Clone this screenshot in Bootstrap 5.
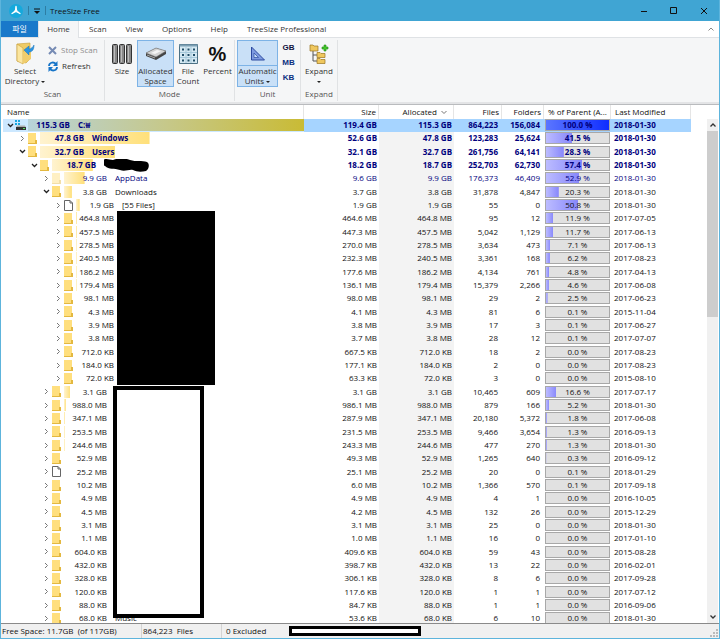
<!DOCTYPE html>
<html lang="ko">
<head>
<meta charset="utf-8">
<meta name="viewport" content="width=device-width, initial-scale=1">
<title>TreeSize Free</title>
<link href="https://cdn.jsdelivr.net/npm/bootstrap@5.3.0/dist/css/bootstrap.min.css" rel="stylesheet">
<style>
body{font:8px/12px "Open Sans","Noto Sans CJK KR",sans-serif;color:#111;background:#fff}
button{font:inherit;color:inherit;background:none;border:0;padding:0}
svg{display:block}
.app{height:100vh;border-left:1px solid #5db4dc;border-right:1px solid #5db4dc;border-bottom:1px solid #5db4dc}
.titlebar{height:21px;background:#40a5d3;padding-left:7px}
.titlebar .sep{width:1px;height:9px;background:#2d7da3}
.wbtn{width:30px;height:21px}
.tabs{height:17px;background:#fff;border-bottom:1px solid #dfe2e5}
.tabs a{color:#333;text-decoration:none;height:16px;line-height:15px}
.tabs .file{background:#1979ca;color:#fff;width:37px;text-align:center}
.tabs .home{background:#f5f6f7;border:1px solid #dfe2e5;border-width:0 1px;height:17px;width:41px;text-align:center}
.tabs .more{gap:19px;padding-left:10px}
.ribbon{background:#f5f6f7;height:64px;padding-top:2px;color:#333}
.grp{border-right:1px solid #e0e2e4;height:61px}
.grp .cap{color:#555;text-align:center;line-height:14px}
.tools{height:47px;padding:0 1px}
.tool{height:47px;line-height:10px;border:1px solid transparent;display:flex;flex-direction:column;align-items:center}
.tool .pic{height:25px;display:flex;align-items:center;justify-content:center;width:100%}
.tool.on{background:#c9e0f7;border-color:#7db3e6}
.tool.split .pic{border-bottom:1px solid #7db3e6}
.w-select{width:46px}.w-size{width:30px}.w-alloc{width:37px}.w-count{width:28px}.w-pct{width:31px}.w-auto2{width:41px}.w-exp{width:34px}
.side{width:55px}
.mode .tools,.unit .tools{padding-left:2px}
.pctsign{font:bold 20px/24px "Liberation Sans",sans-serif;color:#111}
.unitbtn{font:bold 8px/15px "Liberation Sans",sans-serif;color:#0a2f80;width:13px}
.unitbtn.first{color:#101040}
.stop{color:#8d8d8d!important}
.caret{display:inline-block;border:2px solid transparent;border-top-color:#222;border-bottom:0;vertical-align:middle}
.edge{height:3px;background:#e3e4e6;border-bottom:1px solid #b9bbbe}
.main{min-height:0;overflow:hidden;border-bottom:1px solid #8a8a8a;padding-left:2px}
.treebox{flex:1 1 0;min-width:0;overflow:hidden;position:relative}
.tree{width:100%;table-layout:fixed;border-collapse:separate;border-spacing:0;white-space:nowrap}
.tree th,.tree td{padding:0;overflow:hidden;vertical-align:middle}
.tree th{font-weight:400;height:14px;line-height:13px;border-right:1px solid #e5e5e5}
.tree th:last-child{border:0}
.tree tbody td{height:13px;line-height:12px}
.tree tbody tr:nth-child(3n) td{height:14px}
.c-size,.c-alloc{width:75px}.c-files{width:48px}.c-folders{width:42px}.c-pct{width:67px}.c-mod{width:80px}.c-end{width:16px}
.tree .num{text-align:right;padding-right:2px}
.tree .cnt{text-align:right;padding-right:4px}
.tree .day{padding-left:3px}
.tree td.alloc{background:#f3f3f3}
.hot{color:#00007d}
.tree .sel td{background:#a6d4ff}
.tree .sel td:first-child{background:#cce8ff}
.tree .sel td:last-child{background:#fff}
.node{height:13px}
.l0{padding-left:3px}.l1{padding-left:15px}.l2{padding-left:27px}.l3{padding-left:39px}.l4{padding-left:51px}
.twist{width:8px;height:12px;flex:none}
.kind{width:12px;flex:none;margin-right:2px}
.kind svg{margin-left:auto;margin-right:auto}
.lab{gap:8px;height:12px;background:linear-gradient(90deg,#fff3d0,#ffe07a) no-repeat left/0 100%}
.sel .lab{background-image:linear-gradient(90deg,#b8d3da,#c6c88a 50%,#c9bb35)}
.amt{width:44px;text-align:right;flex:none}
.l4 .amt{width:38px}
.l0 .amt{width:42px}
.l3 .amt{width:43px}
.meter{height:12px;margin:0 1px;border:1px solid #a8a8a8;line-height:10px;text-align:center;background:#e1e1e1 linear-gradient(90deg,#bcbcff,#8787fb) no-repeat left/0 100%}
.sel .meter{background-image:linear-gradient(90deg,#5b76ff,#0f2dff)}
.mask-a{position:absolute;left:114px;top:106px;width:98px;height:174px;background:#000}
.mask-b{position:absolute;left:110px;top:281px;width:91px;height:232px;background:#fff;border:4px solid #000}
.sbar{flex:none;width:11px;margin-right:1px;padding-top:14px}
.sbar .track{background:#f0f0f0}
.sbar button{height:12px}
.thumb{background:#cdcdcd;height:186px}
.status{height:14px;background:#f0f0f0;line-height:14px;white-space:pre}
.status .cell{border-right:1px solid #d4d4d4;padding:0 1px}
.s1{width:141px}.s2{width:80px}.s3{width:67px}
.mask-c{width:132px;height:10px;border:3px solid #000;background:#fff}
</style>
<script src="https://cdn.jsdelivr.net/npm/bootstrap@5.3.0/dist/js/bootstrap.bundle.min.js"></script>
</head>
<body>
<div class="app d-flex flex-column">
  <header class="titlebar d-flex align-items-center">
    <svg width="16" height="16" viewBox="0 0 16 16"><circle cx="8" cy="8" r="7" fill="#16a9dc"/><path d="M8 3.500V8M8 8l4 2.500M8 8l-4 2.500" stroke="#fff" stroke-width="1.400" stroke-linecap="round"/><path d="M8 3.200L9.700 8.500 8 9.500 6.300 8.500zM3.800 11L6.500 7.500 8.500 8.500zM12.200 11L9.500 7.500 7.500 8.500z" fill="#fff"/></svg>
    <span class="sep ms-1"></span>
    <button class="mx-1" aria-label="Customize toolbar"><svg width="8" height="8" viewBox="0 0 8 8"><path d="M1 2h6" stroke="#111"/><path d="M1 4h6L4 7z" fill="#111"/></svg></button>
    <span class="sep me-1"></span>
    <span>TreeSize Free</span>
    <span class="ms-auto d-flex">
      <button class="wbtn" aria-label="Minimize"><svg class="m-auto" width="8" height="8" viewBox="0 0 8 8"><path d="M1 4.500h6" stroke="#111"/></svg></button>
      <button class="wbtn" aria-label="Maximize"><svg class="m-auto" width="8" height="8" viewBox="0 0 8 8"><path d="M.5.5h6v6h-6z" fill="none" stroke="#111"/></svg></button>
      <button class="wbtn" aria-label="Close"><svg class="m-auto" width="8" height="8" viewBox="0 0 8 8"><path d="M1 1l6 6M7 1L1 7" stroke="#111"/></svg></button>
    </span>
  </header>

  <nav class="tabs d-flex">
    <a class="file" href="#">파일</a>
    <a class="home" href="#">Home</a>
    <div class="more d-flex">
      <a href="#">Scan</a><a href="#">View</a><a href="#">Options</a><a href="#">Help</a><a href="#">TreeSize Professional</a>
    </div>
    <button class="ms-auto me-1" aria-label="Collapse ribbon"><svg width="8" height="8" viewBox="0 0 8 8"><path d="M1.500 5.500L4 3l2.500 2.500" fill="none" stroke="#888"/></svg></button>
  </nav>

  <section class="ribbon d-flex">
    <div class="grp">
      <div class="tools d-flex">
        <button class="tool w-select"><span class="pic"><svg width="22" height="23" viewBox="0 0 22 23"><path d="M3 2l13-1v16l-4 4-9-2z" fill="#eecb66" stroke="#c79d35" stroke-width=".6"/><path d="M3 2l6 4v16l-6-3z" fill="#fbe6a0" stroke="#c79d35" stroke-width=".6"/><path d="M9 10l8-3v10l-8 5z" fill="#f0cd6c"/><path d="M20 3c0 5-2 7-5 7v3l-5-5 5-4v3c2 0 4-2 5-4z" fill="#2a94e0" stroke="#1872b8" stroke-width=".5"/></svg></span>Select<span class="text-nowrap">Directory <i class="caret"></i></span></button>
        <div class="side">
          <button class="stop d-flex align-items-center mt-1" disabled><svg class="me-1" width="9" height="9" viewBox="0 0 9 9"><path d="M1 1l7 7M8 1L1 8" stroke="#768bb4" stroke-width="2"/></svg>Stop Scan</button>
          <button class="d-flex align-items-center mt-1"><svg class="me-1" width="10" height="11" viewBox="0 0 10 11"><path d="M1 5c0-3 4-5 7-2M9 6c0 3-4 5-7 2" fill="none" stroke="#1674c8" stroke-width="1.800"/><path d="M9.500 0v5H5zM.5 11V6H5z" fill="#1674c8"/></svg>Refresh</button>
        </div>
      </div>
      <div class="cap">Scan</div>
    </div>
    <div class="grp mode">
      <div class="tools d-flex">
        <button class="tool w-size"><span class="pic"><svg width="20" height="20" viewBox="0 0 20 20"><g fill="#888" stroke="#333"><rect x=".5" y=".5" width="5" height="19" rx="1"/><rect x="7.500" y=".5" width="5" height="19" rx="1"/><rect x="14.500" y=".5" width="5" height="19" rx="1"/></g><path d="M2.500 2v16M9.500 2v16M16.500 2v16" stroke="#bbb"/></svg></span>Size</button>
        <button class="tool on w-alloc"><span class="pic"><svg width="22" height="14" viewBox="0 0 22 14"><path d="M1 6l10-5 10 3v3l-10 6L1 9z" fill="#444"/><path d="M1 6l10-5 10 3-10 6z" fill="#d4d4d4" stroke="#777" stroke-width=".6"/><path d="M6 6l6-3 4 1-6 3z" fill="#f5f5f5"/><path d="M2 8l8 3" stroke="#aaa"/></svg></span>Allocated<span>Space</span></button>
        <button class="tool w-count"><span class="pic"><svg width="19" height="20" viewBox="0 0 19 20"><path d="M.5.5h18v19H.5z" fill="#d4e8f2" stroke="#4c7185"/><path d="M.5.500h18v2H.5z" fill="#7b9fb3"/><path d="M7 3v16M12 3v16M1 8.500h17M1 13.500h17" stroke="#a5c8da"/><g fill="#1f4c66"><path d="M3 4.500h2v2H3zM8.500 4.500h2v2h-2zM14 4.500h2v2h-2zM3 10h2v2H3zM8.500 10h2v2h-2zM14 10h2v2h-2zM3 15.500h2v2H3zM8.500 15.500h2v2h-2zM14 15.500h2v2h-2z"/></g></svg></span>File<span>Count</span></button>
        <button class="tool w-pct"><span class="pic pctsign">%</span>Percent</button>
      </div>
      <div class="cap">Mode</div>
    </div>
    <div class="grp unit">
      <div class="tools d-flex">
        <button class="tool on split w-auto2"><span class="pic"><svg width="15" height="15" viewBox="0 0 15 15"><path d="M1.500 1v13h13z" fill="#7e9be0" stroke="#2c4aa0"/><path d="M4 7v4.500h4.500z" fill="#c9e0f7" stroke="#2c4aa0" stroke-width=".7"/></svg></span>Automatic<span class="text-nowrap">Units <i class="caret"></i></span></button>
        <div class="d-flex flex-column ps-1 pe-1">
          <button class="unitbtn first">GB</button><button class="unitbtn">MB</button><button class="unitbtn">KB</button>
        </div>
      </div>
      <div class="cap">Unit</div>
    </div>
    <div class="grp">
      <div class="tools d-flex">
        <button class="tool w-exp"><span class="pic"><svg width="20" height="20" viewBox="0 0 20 20"><path d="M4 6v11h5M4 11h5" fill="none" stroke="#555"/><g fill="#efc75e" stroke="#9a7420" stroke-width=".7"><path d="M1 1h3l1 1h4v5H1zM8 8.500h3l1 1h4v4H8zM8 14.500h3l1 1h4v4H8z"/></g><path d="M15 1h2v2h2v2h-2v2h-2V5h-2V3h2z" fill="#43c52c" stroke="#218d14" stroke-width=".6"/></svg></span>Expand<span><i class="caret"></i></span></button>
      </div>
      <div class="cap">Expand</div>
    </div>
  </section>
  <div class="edge"></div>

  <main class="main d-flex flex-grow-1">
    <div class="treebox">
      <table class="tree">
        <colgroup><col><col class="c-size"><col class="c-alloc"><col class="c-files"><col class="c-folders"><col class="c-pct"><col class="c-mod"><col class="c-end"></colgroup>
        <thead><tr><th class="ps-1">Name</th><th class="num">Size</th><th class="num"><span class="d-flex justify-content-end align-items-center">Allocated<svg class="ms-1 me-1" width="6" height="6" viewBox="0 0 6 6"><path d="M.5 2L3 4.500 5.500 2" fill="none" stroke="#777"/></svg></span></th><th class="num">Files</th><th class="num">Folders</th><th class="ps-1">% of Parent (A...</th><th class="ps-1">Last Modified</th><th></th></tr></thead>
        <tbody id="rows"></tbody>
      </table>
      <div class="mask-a"></div>
      <div class="mask-b"></div>
    </div>
    <div class="sbar d-flex flex-column">
      <div class="track d-flex flex-column flex-grow-1">
        <button aria-label="Scroll up"><svg class="m-auto" width="6" height="6" viewBox="0 0 6 6"><path d="M.5 4.500L3 2l2.500 2.500" fill="none" stroke="#333" stroke-width="1.300"/></svg></button>
        <div class="thumb"></div>
        <button class="mt-auto" aria-label="Scroll down"><svg class="m-auto" width="6" height="6" viewBox="0 0 6 6"><path d="M.5 1.500L3 4l2.500-2.500" fill="none" stroke="#333" stroke-width="1.300"/></svg></button>
      </div>
    </div>
  </main>

  <footer class="status d-flex align-items-center"><span class="cell s1">Free Space: 11.7GB  (of 117GB)</span><span class="cell s2">864,223  Files</span><span class="s3 ps-1">0 Excluded</span><span class="mask-c"></span><svg class="ms-auto mt-auto" width="9" height="9" viewBox="0 0 9 9"><path d="M6 0h2v2H6zM3 3h2v2H3zM6 3h2v2H6zM0 6h2v2H0zM3 6h2v2H3zM6 6h2v2H6z" fill="#bbb"/></svg></footer>
</div>

<script>
// level | flags (o open, b bold, h highlighted, f file, p pale, s selected, x crossed out) | allocated | name | size | files | folders | % | modified
const data = `0|obhs|115.3 GB|C:₩|119.4 GB|864,223|156,084|100.0|2018-01-30
1|bh|47.8 GB|Windows|52.6 GB|123,283|25,624|41.5|2018-01-30
1|obh|32.7 GB|Users|32.1 GB|261,756|64,141|28.3|2018-01-30
2|obhx|18.7 GB||18.2 GB|252,703|62,730|57.4|2018-01-30
3|hp|9.9 GB|AppData|9.6 GB|176,373|46,409|52.9|2018-01-30
3|o|3.8 GB|Downloads|3.7 GB|31,878|4,847|20.3|2018-01-30
4|f|1.9 GB|[55 Files]|1.9 GB|55|0|50.8|2018-01-30
4||464.8 MB||464.6 MB|95|12|11.9|2017-07-05
4||457.5 MB||447.3 MB|5,042|1,129|11.7|2017-06-13
4||278.5 MB||270.0 MB|3,634|473|7.1|2017-06-13
4||240.5 MB||232.3 MB|3,361|168|6.2|2017-08-23
4||186.2 MB||177.6 MB|4,134|761|4.8|2017-04-13
4||179.4 MB||136.1 MB|15,379|2,266|4.6|2017-06-08
4||98.1 MB||98.0 MB|29|2|2.5|2017-06-23
4||4.3 MB||4.1 MB|81|6|0.1|2015-11-04
4||3.9 MB||3.8 MB|17|3|0.1|2017-06-27
4||3.8 MB||3.7 MB|28|12|0.1|2017-07-07
4||712.0 KB||667.5 KB|18|2|0.0|2017-08-23
4||184.0 KB||177.1 KB|2|0|0.0|2017-08-23
4||72.0 KB||63.3 KB|3|0|0.0|2015-08-10
3||3.1 GB||3.1 GB|10,465|609|16.6|2017-07-17
3||988.0 MB||986.1 MB|879|166|5.2|2018-01-30
3||347.1 MB||287.9 MB|20,180|5,372|1.8|2017-06-08
3||253.5 MB||231.5 MB|9,466|3,654|1.3|2016-09-13
3||244.6 MB||243.3 MB|477|270|1.3|2018-01-30
3||52.9 MB||49.3 MB|1,265|640|0.3|2016-09-12
3|f|25.2 MB||25.1 MB|20|0|0.1|2018-01-29
3||10.2 MB||6.0 MB|1,366|570|0.1|2017-09-18
3||4.9 MB||4.9 MB|4|1|0.0|2016-10-05
3||4.5 MB||4.2 MB|132|26|0.0|2015-12-29
3||3.1 MB||3.1 MB|25|0|0.0|2018-01-30
3||1.1 MB||1.0 MB|16|0|0.0|2017-01-10
3||604.0 KB||409.6 KB|59|43|0.0|2015-08-28
3||432.0 KB||398.7 KB|13|22|0.0|2016-02-01
3||328.0 KB||306.1 KB|8|6|0.0|2017-09-28
3||120.0 KB||117.6 KB|1|1|0.0|2017-07-12
3||88.0 KB||84.7 KB|1|1|0.0|2016-09-06
3||68.0 KB|Music|53.6 KB|6|10|0.0|2018-01-30`;
const folder = o => `<svg opacity="${o}" width="9" height="11" viewBox="0 0 9 11"><path d="M0 0h8v8h1v3H0z" fill="#ffdf7e"/><path d="M0 10h9v1H0zM7 7h2v4H7z" fill="#e3b840"/></svg>`;
const file = `<svg width="9" height="11" viewBox="0 0 9 11"><path d="M.5.5h5.500L8.500 3v7.500h-8zM6 .5V3h2.500" fill="#fff" stroke="#666"/></svg>`;
const drive = `<svg width="11" height="10" viewBox="0 0 11 10"><path d="M0 0h2v2H0zM3 0h2v2H3zM0 3h2v2H0zM3 3h2v2H3z" fill="#18a7e0"/><path d="M2 5.500h8l1 2H1z" fill="#aaa"/><path d="M1 7h10v3H1z" fill="#333"/><path d="M8 8h2v1H8z" fill="#5fe05f"/></svg>`;
const scribble = `<svg width="46" height="13" viewBox="2 0 46 13"><path d="M1 1C5-1 7 1 11 1c4-2 13-2 17 0 6 2 12 0 17 2 3 2 2 7-1 9-5 1-9 1-13-1-4-1-8 2-13 0C12 9 7 11 3 7 1 6-2 3 1 1z" fill="#000"/></svg>`;
const twist = open => `<svg class="m-auto" width="7" height="7" viewBox="0 0 7 7"><path d="${open ? 'M1 2l2.500 2.500L6 2' : 'M2 1l2.500 2.500L2 6'}" fill="none" stroke="${open ? '#222' : '#777'}" stroke-width="${open ? 1.3 : 1}"/></svg>`;
const unit = {GB: 1, MB: 1 / 1024, KB: 1 / 1048576};
document.getElementById('rows').innerHTML = data.split('\n').map(line => {
  const [lv, fl, alloc, name, size, files, folders, pct, day] = line.split('|');
  const has = c => fl.includes(c);
  const [v, u] = alloc.split(' ');
  const share = v * unit[u] / 115.3 * 100;
  const cls = [has('s') && 'sel', has('b') && 'fw-bold'].filter(Boolean).join(' ');
  const hot = has('h') ? ' hot' : '';
  const icon = has('s') ? drive : has('f') ? file : folder(has('p') ? .45 : 1);
  return `<tr class="${cls}"><td class="${hot}"><div class="node d-flex align-items-center l${lv}"><button class="twist" aria-label="Toggle">${twist(has('o'))}</button><span class="kind">${icon}</span><span class="lab d-flex flex-grow-1" style="background-size:${share < .15 ? 0 : share.toFixed(1)}% 100%"><span class="amt">${alloc}</span><span>${has('x') ? scribble : name}</span></span></div></td>`
    + `<td class="num${hot}">${size}</td><td class="num alloc${hot}">${alloc}</td><td class="cnt${hot}">${files}</td><td class="cnt${hot}">${folders}</td>`
    + `<td class="${hot}"><div class="meter" style="background-size:${pct}% 100%">${pct} %</div></td><td class="day${hot}">${day}</td><td></td></tr>`;
}).join('');
</script>
</body>
</html>
